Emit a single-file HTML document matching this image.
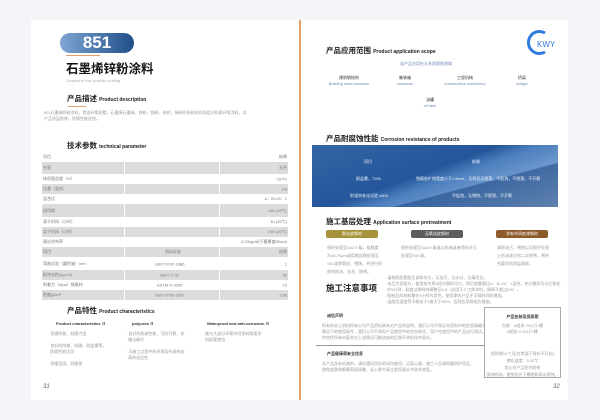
<!DOCTYPE html>
<html><head><meta charset="utf-8"><style>
*{margin:0;padding:0;box-sizing:border-box}
body{width:600px;height:420px;background:#f3f5f8;position:relative;overflow:hidden;font-family:"Liberation Sans","Noto Sans CJK SC",sans-serif;color:#222}
.a{position:absolute;white-space:nowrap}
.pg{position:absolute;background:#fff;top:20px;height:380px}
.h{font-weight:bold;font-size:7.5px;color:#222;line-height:9px}
.h small{font-size:5px}
.t{font-size:4px;color:#999;line-height:6px}
.tb{position:absolute;left:42px;width:246px;font-size:4px;color:#777}
.r{position:absolute;left:0;width:246px}
.g{background:#dcdcdc}
.r span{position:absolute;top:50%;transform:translateY(-50%)}
</style></head><body>
<div class="pg" style="left:31px;width:268px"></div>
<div class="pg" style="left:301px;width:267px"></div>
<div class="a" style="left:299px;top:20px;width:2px;height:380px;background:#e3a26d"></div>

<!-- left page -->
<div class="a" style="left:60px;top:33px;width:74px;height:20px;border-radius:10px;background:linear-gradient(90deg,#7fa6d3,#1f4e8a);color:#fff;font-weight:bold;font-size:17px;text-align:center;line-height:20px">851</div>
<div class="a" style="left:66px;top:55px;width:34px;height:1px;background:#e3a26d"></div>
<div class="a" style="left:66px;top:62px;font-size:12.5px;line-height:14px;font-weight:bold;color:#111">石墨烯锌粉涂料</div>
<div class="a t" style="left:66px;top:78px;color:#aaa">Graphene zinc powder coating</div>
<div class="a h" style="left:67px;top:94px">产品描述 <small>Product description</small></div>
<div class="a" style="left:68px;top:106px;width:18px;height:1px;background:#e3a26d"></div>
<div class="a t" style="left:44px;top:110px">851石墨烯锌粉涂料，是由环氧树脂、石墨烯石墨烯、锌粉、铁粉、助剂、稀释剂所制成的双组分防腐环氧涂料，本<br>产品涂层防锈，防腐性能优良。</div>
<div class="a h" style="left:67px;top:141px">技术参数 <small>technical parameter</small></div>
<div class="tb" style="top:152px;height:148px">
<div class="r" style="top:0;height:10px"><span style="left:1px">项目</span><span style="right:1px">结果</span></div>
<div class="r g" style="top:10px;height:12px"><span style="left:1px">外观</span><span style="right:1px">无色</span></div>
<div class="r" style="top:22px;height:10px"><span style="left:1px">体积固含量（%）</span><span style="right:1px">≥57%</span></div>
<div class="r g" style="top:32px;height:10px"><span style="left:1px">比重（混合）</span><span style="right:1px">2.6</span></div>
<div class="r" style="top:42px;height:10px"><span style="left:1px">混合比</span><span style="right:1px">A：B=25：1</span></div>
<div class="r g" style="top:52px;height:13px"><span style="left:1px">适用期</span><span style="right:1px">≤4h (25℃)</span></div>
<div class="r" style="top:65px;height:10px"><span style="left:1px">表干时间（小时）</span><span style="right:1px">1h (25℃)</span></div>
<div class="r g" style="top:75px;height:10px"><span style="left:1px">实干时间（小时）</span><span style="right:1px">24h (25℃)</span></div>
<div class="r" style="top:85px;height:10px"><span style="left:1px">理论涂布率</span><span style="right:1px">0.23kg/㎡(干膜厚度60um)</span></div>
<div class="r g" style="top:95px;height:10px"><span style="left:1px">项目</span><span style="left:123px">测试标准</span><span style="right:1px">结果</span></div>
<div class="r" style="top:105px;height:13px"><span style="left:1px">弯曲试验（圆柱轴）mm</span><span style="left:113px">GB/T 6742-1986</span><span style="right:1px">1</span></div>
<div class="r g" style="top:118px;height:10px"><span style="left:1px">耐冲击性(kg.cm)</span><span style="left:118px">GB/T 1732</span><span style="right:1px">50</span></div>
<div class="r" style="top:128px;height:10px"><span style="left:1px">附着力（Mpa）钢基材</span><span style="left:115px">ASTM D-3359</span><span style="right:1px">15</span></div>
<div class="r g" style="top:138px;height:10px"><span style="left:1px">密度g/cm³</span><span style="left:113px">GB/T 6750-2007</span><span style="right:1px">2.85</span></div>
<div class="a" style="left:82px;top:10px;width:1px;height:138px;background:#fff"></div>
<div class="a" style="left:177px;top:10px;width:1px;height:138px;background:#fff"></div>
</div>
<div class="a h" style="left:67px;top:306px">产品特性 <small>Product characteristics</small></div>
<div class="a" style="left:56px;top:321px;font-size:4px;font-weight:bold;color:#333">Product characteristics Ⅱ</div>
<div class="a" style="left:132px;top:321px;font-size:4px;font-weight:bold;color:#333">polyurea Ⅱ</div>
<div class="a" style="left:207px;top:321px;font-size:4px;font-weight:bold;color:#333">Waterproof and anti-corrosion Ⅱ</div>
<div class="a t" style="left:49px;top:331px">·涂膜附着，耐磨力强<br><br>·良好的附着、耐碱、耐盐雾等，<br>&nbsp;防腐性能优异<br><br>·涂膜坚固，耐磨损</div>
<div class="a t" style="left:127px;top:331px">·良好的机械性能，可防开裂，抗<br>&nbsp;撞击破坏<br><br>·可施工过程中的环境条件具有较<br>&nbsp;高的适应性</div>
<div class="a t" style="left:204px;top:331px">·能与大部分环氧中间涂料和面涂<br>&nbsp;料配套使用</div>
<div class="a" style="left:43px;top:384px;font-size:6px;font-style:italic;color:#666">31</div>

<!-- right page -->
<svg class="a" style="left:524px;top:29px" width="34" height="27" viewBox="0 0 34 27"><path d="M21 4 A11 11 0 1 0 21 23" fill="none" stroke="#2f7be0" stroke-width="3"/><text x="13" y="18" font-size="8" fill="#2f7be0" font-family="Liberation Sans">KWY</text></svg>
<div class="a h" style="left:326px;top:46px">产品应用范围 <small>Product application scope</small></div>
<div class="a t" style="left:400px;top:61px;color:#6f87b5">该产品应用在众多耐腐蚀领域</div>
<div class="a t" style="left:325px;top:75px;text-align:center;width:48px;color:#333">建筑钢结构<br><span style="color:#6f87b5">Building steel structure</span></div>
<div class="a t" style="left:390px;top:75px;text-align:center;width:30px;color:#333">集装箱<br><span style="color:#6f87b5">container</span></div>
<div class="a t" style="left:440px;top:75px;text-align:center;width:50px;color:#333">工程机械<br><span style="color:#6f87b5">construction machinery</span></div>
<div class="a t" style="left:512px;top:75px;text-align:center;width:20px;color:#333">桥梁<br><span style="color:#6f87b5">bridge</span></div>
<div class="a t" style="left:420px;top:97px;text-align:center;width:20px;color:#333">油罐<br><span style="color:#6f87b5">oil tank</span></div>
<div class="a h" style="left:326px;top:134px">产品耐腐蚀性能 <small>Corrosion resistance of products</small></div>
<div class="a" style="left:312px;top:145px;width:246px;height:62px;background:linear-gradient(160deg,#3266a6 0%,#24579a 45%,#4d80bf 55%,#a9c6e6 100%)"></div>
<div class="a" style="left:312px;top:145px;width:246px;height:62px;background:linear-gradient(165deg,rgba(0,0,0,0) 65%,rgba(20,60,120,.5) 66%)"></div>
<div class="a" style="left:312px;top:153px;width:246px;font-size:4px;color:#eef3fa;line-height:17px">
<span class="a" style="left:52px;top:0">项目</span><span class="a" style="left:160px;top:0">结果</span>
<span class="a" style="left:44px;top:17px">耐盐雾，720h</span><span class="a" style="left:104px;top:17px">划痕处扩蚀宽度小于1.5mm，无明显无脱落，不起泡，不脱落，不开裂</span>
<span class="a" style="left:38px;top:34px">耐湿热老化试验 480h</span><span class="a" style="left:140px;top:34px">不起泡，无锈蚀，不脱落，不开裂</span>
</div>
<div class="a h" style="left:326px;top:217px">施工基层处理 <small>Application surface pretreatment</small></div>
<div class="a" style="left:326px;top:230px;width:52px;height:8px;background:#a8933a;border-radius:2px;font-size:4px;color:#fff;text-align:center;line-height:8px">氧化皮钢材</div>
<div class="a" style="left:411px;top:230px;width:52px;height:8px;background:#5d5d5d;border-radius:2px;font-size:4px;color:#fff;text-align:center;line-height:8px">无氧化皮钢材</div>
<div class="a" style="left:496px;top:230px;width:52px;height:8px;background:#8d5a2c;border-radius:2px;font-size:4px;color:#fff;text-align:center;line-height:8px">涂有车间底漆钢材</div>
<div class="a t" style="left:327px;top:244px;line-height:8px">喷砂处理至Sa2.5 级，粗糙度<br>为40-75μm或用钢丝刷处理至<br>St3 级除氧皮、锈蚀，并进行彻<br>底的除油、去灰、除锈。</div>
<div class="a t" style="left:401px;top:244px;line-height:8px">喷砂处理至Sa2.5 级或以机械或者喷砂方式<br>处理至St3 级。</div>
<div class="a t" style="left:497px;top:244px;line-height:8px">清除油污、锈蚀以及损坏处理<br>上的油漆达到二次除锈，将符<br>合要求的涂层清除。</div>
<div class="a" style="left:326px;top:283px;font-size:8.5px;line-height:10px;font-weight:bold;color:#222">施工注意事项</div>
<div class="a t" style="left:386px;top:275px">·请按照配套配比调和均匀，无油污、无水分、无漏涂点。<br>·本品为双组分，使用前先将A组分搅拌均匀，然后按重量比A：B=25：1混合，充分搅拌均匀后熟化<br>&nbsp;约5分钟，粘度过稀释剂调整至6-8（适用于人工刷涂时，稀释不超过5%）。<br>·配制后的材料需在5小时内用完，使用期内产品不可随时间的增加。<br>·温度及湿度等不能低于5度大于85%，否则应采取相应措施。</div>
<div class="a" style="left:327px;top:313px;font-size:4px;font-weight:bold;color:#333">诚信声明</div>
<div class="a t" style="left:322px;top:323px">所有的本上资料所有公司产品资料具有对产品的说明，我们公司不保证本资料中的信息精确无误在不同<br>情况下的使用条件，我们公司不承担产品使用中的任何责任，用户在使用中的产品自行测试，我们不保证<br>符合性所有内容并对上述情况可能造成的后果不承担任何责任。</div>
<div class="a" style="left:316px;top:345px;width:168px;height:1px;background:#999"></div>
<div class="a" style="left:327px;top:351px;font-size:4px;font-weight:bold;color:#333">产品健康和安全信息</div>
<div class="a t" style="left:322px;top:361px">本产品含有机溶剂，请在通风良好的场所使用；远离火源，施工人员请佩戴防护用品，<br>避免皮肤和眼睛直接接触，误入眼中请立即用清水冲洗并就医。</div>
<div class="a" style="left:484px;top:307px;width:77px;height:71px;border:1px solid #aaa;background:#fff"></div>
<div class="a" style="left:484px;top:314px;width:77px;text-align:center;font-size:4px;font-weight:bold;color:#333">产品包装及保质期</div>
<div class="a t" style="left:484px;top:323px;width:77px;text-align:center">包装：A组份 20公斤/桶<br>B组份 0.8公斤/桶</div>
<div class="a t" style="left:484px;top:350px;width:77px;text-align:center;line-height:7px">保质期12个月(在常温下保存不开封)<br>储存温度：5-30℃<br>禁止在产品阳光照射<br>保持阴凉，避免阳光下暴晒和雨水侵蚀。</div>
<div class="a" style="left:553px;top:384px;font-size:6px;font-style:italic;color:#666">32</div>
</body></html>
